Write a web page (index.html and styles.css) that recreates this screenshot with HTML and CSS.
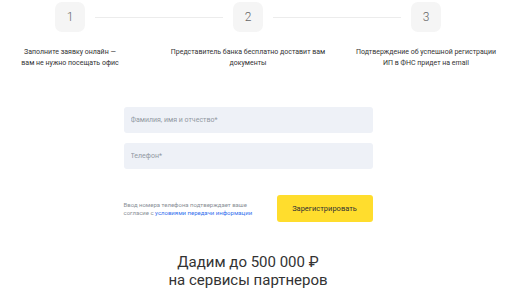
FILE: index.html
```html
<!DOCTYPE html>
<html lang="ru">
<head>
    <meta charset="UTF-8">
    <meta name="viewport" content="width=device-width, initial-scale=1.0">
    <title>Регистрация ИП</title>
    <link rel="stylesheet" href="styles.css">
</head>
<body>

    <div class="page">
        <div class="steps">
            <div class="step">
                <div class="step-num">1</div>
                <p class="step-text">Заполните заявку онлайн —<br>вам не нужно посещать офис</p>
            </div>
            <div class="step">
                <div class="step-num">2</div>
                <p class="step-text">Представитель банка бесплатно доставит вам<br>документы</p>
            </div>
            <div class="step">
                <div class="step-num">3</div>
                <p class="step-text">Подтверждение об успешной регистрации<br>ИП в ФНС придет на email</p>
            </div>
        </div>

        <form class="form">
            <input type="text" class="field" placeholder="Фамилия, имя и отчество*">
            <input type="tel" class="field" placeholder="Телефон*">

            <div class="form-bottom">
                <p class="note">Ввод номера телефона подтверждает ваше<br>согласие с <a href="#">условиями передачи информации</a></p>
                <button type="button" class="btn">Зарегистрировать</button>
            </div>
        </form>

        <h2 class="promo">Дадим до 500 000 ₽<br>на сервисы партнеров</h2>
    </div>

</body>
</html>
```

FILE: styles.css
```css
* {
    box-sizing: border-box;
}
body {
    font-family: Roboto, "Liberation Sans", sans-serif;
    background: #fff;
    color: #333;
    margin: 0;
    overflow: hidden;
}
.page {
    width: 496px;
    padding-top: 2px;
}
.steps {
    display: flex;
    justify-content: center;
}
.step {
    flex: 0 0 178px;
    display: flex;
    flex-direction: column;
    align-items: center;
    position: relative;
}
/* линия между шагами */
.step + .step::before {
    content: "";
    position: absolute;
    top: 15px;
    left: -64px;
    width: 128px;
    height: 1px;
    background: #ececec;
}
.step-num {
    width: 30px;
    height: 30px;
    border-radius: 7px;
    background: #f5f5f5;
    color: #666;
    font-size: 12px;
    font-weight: 300;
    display: flex;
    align-items: center;
    justify-content: center;
}
.step-text {
    margin: 15px 0 0;
    font-size: 7px;
    line-height: 11px;
    text-align: center;
    color: #333;
    white-space: nowrap;
}
.form {
    width: 249px;
    margin: 38px auto 0;
    display: flex;
    flex-direction: column;
    gap: 10px;
}
.field {
    width: 100%;
    height: 26px;
    border: none;
    border-radius: 3px;
    background: #eef1f7;
    padding: 0 7px;
    font-family: inherit;
    font-size: 7px;
    color: #333;
}
.field::placeholder {
    color: #9299a2;
}
.form-bottom {
    display: flex;
    justify-content: space-between;
    align-items: center;
    margin-top: 16px;
}
.note {
    margin: 0;
    font-size: 6px;
    line-height: 8px;
    color: #8a8f96;
}
.note a {
    color: #336fee;
    text-decoration: none;
}
.btn {
    width: 96px;
    height: 27px;
    border: none;
    border-radius: 3px;
    background: #ffdd2d;
    color: #333;
    font-family: inherit;
    font-size: 7.5px;
    cursor: pointer;
}
.promo {
    margin: 31px 0 0;
    font-size: 15px;
    font-weight: 400;
    line-height: 18px;
    text-align: center;
    color: #333;
}
```
